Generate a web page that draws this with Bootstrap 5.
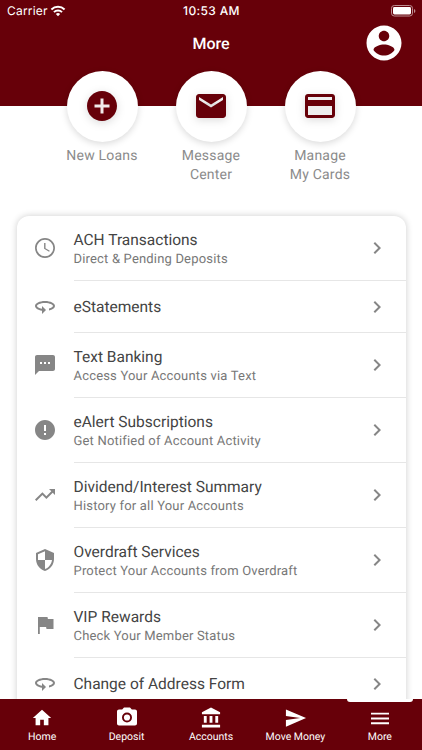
<!DOCTYPE html>
<html lang="en">
<head>
<meta charset="utf-8">
<meta name="viewport" content="width=device-width, initial-scale=1">
<title>More</title>
<link href="https://cdn.jsdelivr.net/npm/bootstrap@5.3.0/dist/css/bootstrap.min.css" rel="stylesheet">
<style>
body{font-family:Roboto,sans-serif;height:750px;overflow:hidden;background:#fff;text-rendering:geometricPrecision}
svg{display:block;fill:currentColor;flex:none}
.maroon{background:#670009;color:#fff}
.top-area{height:106px}
.status-line{height:22px;font-family:Inter,sans-serif;font-size:12px;letter-spacing:.2px;padding:0 6px 0 7px}
.side{width:100px}
.side svg{margin-left:-2px}
.clock-text{font-weight:500;letter-spacing:.35px}
.title-line{height:42px;padding-right:17px}
.page-title{font-size:16px;font-weight:500;line-height:20px;padding-top:2px}
.shortcuts{margin-top:-35.500px;padding:0 47.500px}
.shortcut{width:109px;color:#8b8b8b;font-size:14px;line-height:19px;letter-spacing:.2px}
.disc{width:71px;height:71px;color:#670009;box-shadow:0 2px 7px rgba(0,0,0,.15);margin-bottom:5.500px}
.disc svg{filter:drop-shadow(0 2px 4px rgba(0,0,0,.14))}
.menu-card{margin:31px 16.500px 0;border-radius:12px 12px 0 0;box-shadow:0 0 7px rgba(0,0,0,.2);height:540px}
.entry{height:65px;padding-left:16.500px;color:#868686}
.entry>svg{margin-bottom:1px}
.entry.short{height:52px}
.entry-body{margin-left:16.500px;border-bottom:1px solid #e6e6e6;padding-right:16.500px}
.entry-title{font-size:15.500px;line-height:20px;color:#444;padding-top:2px}
.short .entry-title{padding-top:1px}
.entry-sub{font-size:13px;line-height:18px;color:#777;letter-spacing:.18px;padding-top:1px;margin-bottom:-1px}
.tabs{height:51px;font-size:10.500px}
.tab-item{padding-top:8px;line-height:14px}
.tab-item svg{margin-bottom:1px}
.marker{width:66px;height:3px;border-radius:0 0 3px 3px;right:9px}
</style>
<script src="https://cdn.jsdelivr.net/npm/bootstrap@5.3.0/dist/js/bootstrap.bundle.min.js"></script>
</head>
<body>
<header class="top-area maroon">
  <div class="status-line d-flex align-items-center justify-content-between">
    <div class="side d-flex align-items-center gap-1"><span>Carrier</span>
      <svg width="16" height="12" viewBox="0 0 17 12" fill="none" stroke="#fff"><g fill="none" stroke-width="2.1"><path d="M1.5 4.4a10 10 0 0 1 14 0"/><path d="M4.2 7.2a6.2 6.2 0 0 1 8.6 0"/></g><path d="M8.5 11.6 6.2 9.2a3.2 3.2 0 0 1 4.6 0z" fill="#fff" stroke="none"/></svg>
    </div>
    <span class="clock-text">10:53 AM</span>
    <div class="side d-flex justify-content-end">
      <svg width="25" height="12" viewBox="0 0 25 12"><rect x=".5" y=".5" width="21" height="10.5" rx="2.8" fill="none" stroke="#bd8d91"/><rect x="2" y="2" width="18" height="7.5" rx="1.4"/><path d="M23 4v4q1.4-.5 1.4-2T23 4z" fill="#bd8d91"/></svg>
    </div>
  </div>
  <div class="title-line d-flex align-items-center justify-content-end position-relative">
    <h1 class="page-title mb-0 w-100 text-center position-absolute start-0">More</h1>
    <svg width="42" height="42" viewBox="0 0 24 24"><path d="M12 2C6.48 2 2 6.48 2 12s4.48 10 10 10 10-4.48 10-10S17.52 2 12 2zm0 3c1.66 0 3 1.34 3 3s-1.340 3-3 3-3-1.340-3-3 1.340-3 3-3zm0 14.200c-2.500 0-4.710-1.280-6-3.220.030-1.990 4-3.080 6-3.080 1.990 0 5.970 1.090 6 3.080-1.290 1.940-3.500 3.220-6 3.220z"/></svg>
  </div>
</header>

<main>
  <div class="shortcuts d-flex position-relative text-center">
    <div class="shortcut d-flex flex-column align-items-center"><div class="disc rounded-circle bg-white d-flex align-items-center justify-content-center"><svg width="36" height="36" viewBox="0 0 24 24"><circle cx="12" cy="12" r="9" fill="#f1e9e9"/><path d="M12 2C6.480 2 2 6.480 2 12s4.480 10 10 10 10-4.480 10-10S17.520 2 12 2zm5 11h-4v4h-2v-4H7v-2h4V7h2v4h4v2z"/></svg></div>New Loans</div>
    <div class="shortcut d-flex flex-column align-items-center"><div class="disc rounded-circle bg-white d-flex align-items-center justify-content-center"><svg width="36" height="36" viewBox="0 0 24 24"><path fill="#eee" d="M3 5h18v5H3z"/><path d="M20 4H4c-1.100 0-1.990.900-1.990 2L2 18c0 1.100.900 2 2 2h16c1.100 0 2-.900 2-2V6c0-1.100-.900-2-2-2zm0 4l-8 5-8-5V6l8 5 8-5v2z"/></svg></div>Message<br>Center</div>
    <div class="shortcut d-flex flex-column align-items-center"><div class="disc rounded-circle bg-white d-flex align-items-center justify-content-center"><svg width="36" height="36" viewBox="0 0 24 24"><path fill="#eee" d="M3 5h18v14H3z"/><path d="M20 4H4c-1.110 0-1.990.890-1.990 2L2 18c0 1.110.890 2 2 2h16c1.110 0 2-.890 2-2V6c0-1.110-.890-2-2-2zm0 14H4v-6h16v6zm0-10H4V6h16v2z"/></svg></div>Manage<br>My Cards</div>
  </div>

  <section class="menu-card bg-white">
    <div class="entry d-flex align-items-center"><svg width="24" height="24" viewBox="0 0 24 24"><path d="M11.990 2C6.470 2 2 6.480 2 12s4.470 10 9.990 10C17.520 22 22 17.520 22 12S17.520 2 11.990 2zM12 20.300a8.300 8.300 0 1 1 0-16.600 8.300 8.300 0 0 1 0 16.600zM12.500 7h-1.400v5.800l5 3 .7-1.150-4.300-2.500z"/></svg><div class="entry-body h-100 flex-grow-1 d-flex align-items-center justify-content-between"><div><div class="entry-title">ACH Transactions</div><div class="entry-sub">Direct &amp; Pending Deposits</div></div><svg width="24" height="24" viewBox="0 0 24 24"><path d="M10 6 8.590 7.410 13.170 12l-4.580 4.590L10 18l6-6z"/></svg></div></div>
    <div class="entry short d-flex align-items-center"><svg width="24" height="24" viewBox="0 0 24 24"><path d="M12 6C6.480 6 2 8.240 2 11c0 2.240 2.940 4.130 7 4.770V19l4-4-4-4v2.730c-3.150-.560-5-1.900-5-2.730 0-1.060 3.040-3 8-3s8 1.940 8 3c0 .730-1.460 1.890-4 2.530v2.050c3.530-.770 6-2.530 6-4.580 0-2.760-4.480-5-10-5z"/></svg><div class="entry-body h-100 flex-grow-1 d-flex align-items-center justify-content-between"><div class="entry-title">eStatements</div><svg width="24" height="24" viewBox="0 0 24 24"><path d="M10 6 8.590 7.410 13.170 12l-4.580 4.590L10 18l6-6z"/></svg></div></div>
    <div class="entry d-flex align-items-center"><svg width="24" height="24" viewBox="0 0 24 24"><path d="M20 2H4c-1.100 0-1.990.900-1.990 2L2 22l4-4h14c1.100 0 2-.900 2-2V4c0-1.100-.900-2-2-2zM9 11H7V9h2v2zm4 0h-2V9h2v2zm4 0h-2V9h2v2z"/></svg><div class="entry-body h-100 flex-grow-1 d-flex align-items-center justify-content-between"><div><div class="entry-title">Text Banking</div><div class="entry-sub">Access Your Accounts via Text</div></div><svg width="24" height="24" viewBox="0 0 24 24"><path d="M10 6 8.590 7.410 13.170 12l-4.580 4.590L10 18l6-6z"/></svg></div></div>
    <div class="entry d-flex align-items-center"><svg width="24" height="24" viewBox="0 0 24 24"><path d="M12 2C6.480 2 2 6.480 2 12s4.480 10 10 10 10-4.480 10-10S17.520 2 12 2zm1 15h-2v-2h2v2zm0-4h-2V7h2v6z"/></svg><div class="entry-body h-100 flex-grow-1 d-flex align-items-center justify-content-between"><div><div class="entry-title">eAlert Subscriptions</div><div class="entry-sub">Get Notified of Account Activity</div></div><svg width="24" height="24" viewBox="0 0 24 24"><path d="M10 6 8.590 7.410 13.170 12l-4.580 4.590L10 18l6-6z"/></svg></div></div>
    <div class="entry d-flex align-items-center"><svg width="24" height="24" viewBox="0 0 24 24"><path d="M16 6l2.290 2.290-4.880 4.880-4-4L2 16.590 3.410 18l6-6 4 4 6.300-6.290L22 12V6z"/></svg><div class="entry-body h-100 flex-grow-1 d-flex align-items-center justify-content-between"><div><div class="entry-title">Dividend/Interest Summary</div><div class="entry-sub">History for all Your Accounts</div></div><svg width="24" height="24" viewBox="0 0 24 24"><path d="M10 6 8.590 7.410 13.170 12l-4.580 4.590L10 18l6-6z"/></svg></div></div>
    <div class="entry d-flex align-items-center"><svg width="24" height="24" viewBox="0 0 24 24"><path fill-rule="evenodd" d="M12 1 3 5v6c0 5.550 3.840 10.740 9 12 5.160-1.260 9-6.450 9-12V5l-9-4zM12 3.200V12H5V6.300zM12 12h7c-.530 4.120-3.280 7.790-7 8.940z"/></svg><div class="entry-body h-100 flex-grow-1 d-flex align-items-center justify-content-between"><div><div class="entry-title">Overdraft Services</div><div class="entry-sub">Protect Your Accounts from Overdraft</div></div><svg width="24" height="24" viewBox="0 0 24 24"><path d="M10 6 8.590 7.410 13.170 12l-4.580 4.590L10 18l6-6z"/></svg></div></div>
    <div class="entry d-flex align-items-center"><svg width="24" height="24" viewBox="0 0 24 24"><path d="M14.900 6L14.500 4H5v17h1.800v-7h6.300l.4 2h7V6z"/></svg><div class="entry-body h-100 flex-grow-1 d-flex align-items-center justify-content-between"><div><div class="entry-title">VIP Rewards</div><div class="entry-sub">Check Your Member Status</div></div><svg width="24" height="24" viewBox="0 0 24 24"><path d="M10 6 8.590 7.410 13.170 12l-4.580 4.590L10 18l6-6z"/></svg></div></div>
    <div class="entry short d-flex align-items-center"><svg width="24" height="24" viewBox="0 0 24 24"><path d="M12 6C6.480 6 2 8.240 2 11c0 2.240 2.940 4.130 7 4.770V19l4-4-4-4v2.730c-3.150-.560-5-1.900-5-2.730 0-1.060 3.040-3 8-3s8 1.940 8 3c0 .730-1.460 1.890-4 2.530v2.050c3.530-.770 6-2.530 6-4.580 0-2.760-4.480-5-10-5z"/></svg><div class="entry-body h-100 flex-grow-1 d-flex align-items-center justify-content-between"><div class="entry-title">Change of Address Form</div><svg width="24" height="24" viewBox="0 0 24 24"><path d="M10 6 8.590 7.410 13.170 12l-4.580 4.590L10 18l6-6z"/></svg></div></div>
  </section>
</main>

<nav class="tabs maroon fixed-bottom d-flex text-center">
  <div class="tab-item flex-fill w-100 d-flex flex-column align-items-center"><svg width="22" height="22" viewBox="0 0 24 24"><path d="M10 20v-6h4v6h5v-8h3L12 3 2 12h3v8z"/></svg>Home</div>
  <div class="tab-item flex-fill w-100 d-flex flex-column align-items-center"><svg width="24" height="22" viewBox="0 1.500 24 22"><path fill-rule="evenodd" d="M9 2 7.170 4H4c-1.100 0-2 .900-2 2v12c0 1.100.900 2 2 2h16c1.100 0 2-.900 2-2V6c0-1.100-.900-2-2-2h-3.170L15 2zM12 17a5 5 0 1 1 0-10 5 5 0 0 1 0 10z"/><circle cx="12" cy="12" r="3.100"/></svg>Deposit</div>
  <div class="tab-item flex-fill w-100 d-flex flex-column align-items-center"><svg width="24" height="22" viewBox="-.5 .5 24 23"><path d="M4 10v7h3v-7H4zm6 0v7h3v-7h-3zM2 22h19v-3H2v3zm14-12v7h3v-7h-3zm-4.500-9L2 6v2h19V6l-9.500-5z"/></svg>Accounts</div>
  <div class="tab-item flex-fill w-100 d-flex flex-column align-items-center"><svg width="23" height="22" viewBox="0 1 24 22"><path d="M2.010 21 23 12 2.010 3 2 10l15 2-15 2z"/></svg>Move Money</div>
  <div class="tab-item flex-fill w-100 d-flex flex-column align-items-center"><svg width="24" height="22" viewBox="0 1 24 22"><path d="M3 18.200h18v-1.900H3zm0-4.800h18v-1.900H3zm0-6.700v1.900h18V6.700z"/></svg>More</div>
  <div class="marker bg-white position-absolute top-0"></div>
</nav>
</body>
</html>
